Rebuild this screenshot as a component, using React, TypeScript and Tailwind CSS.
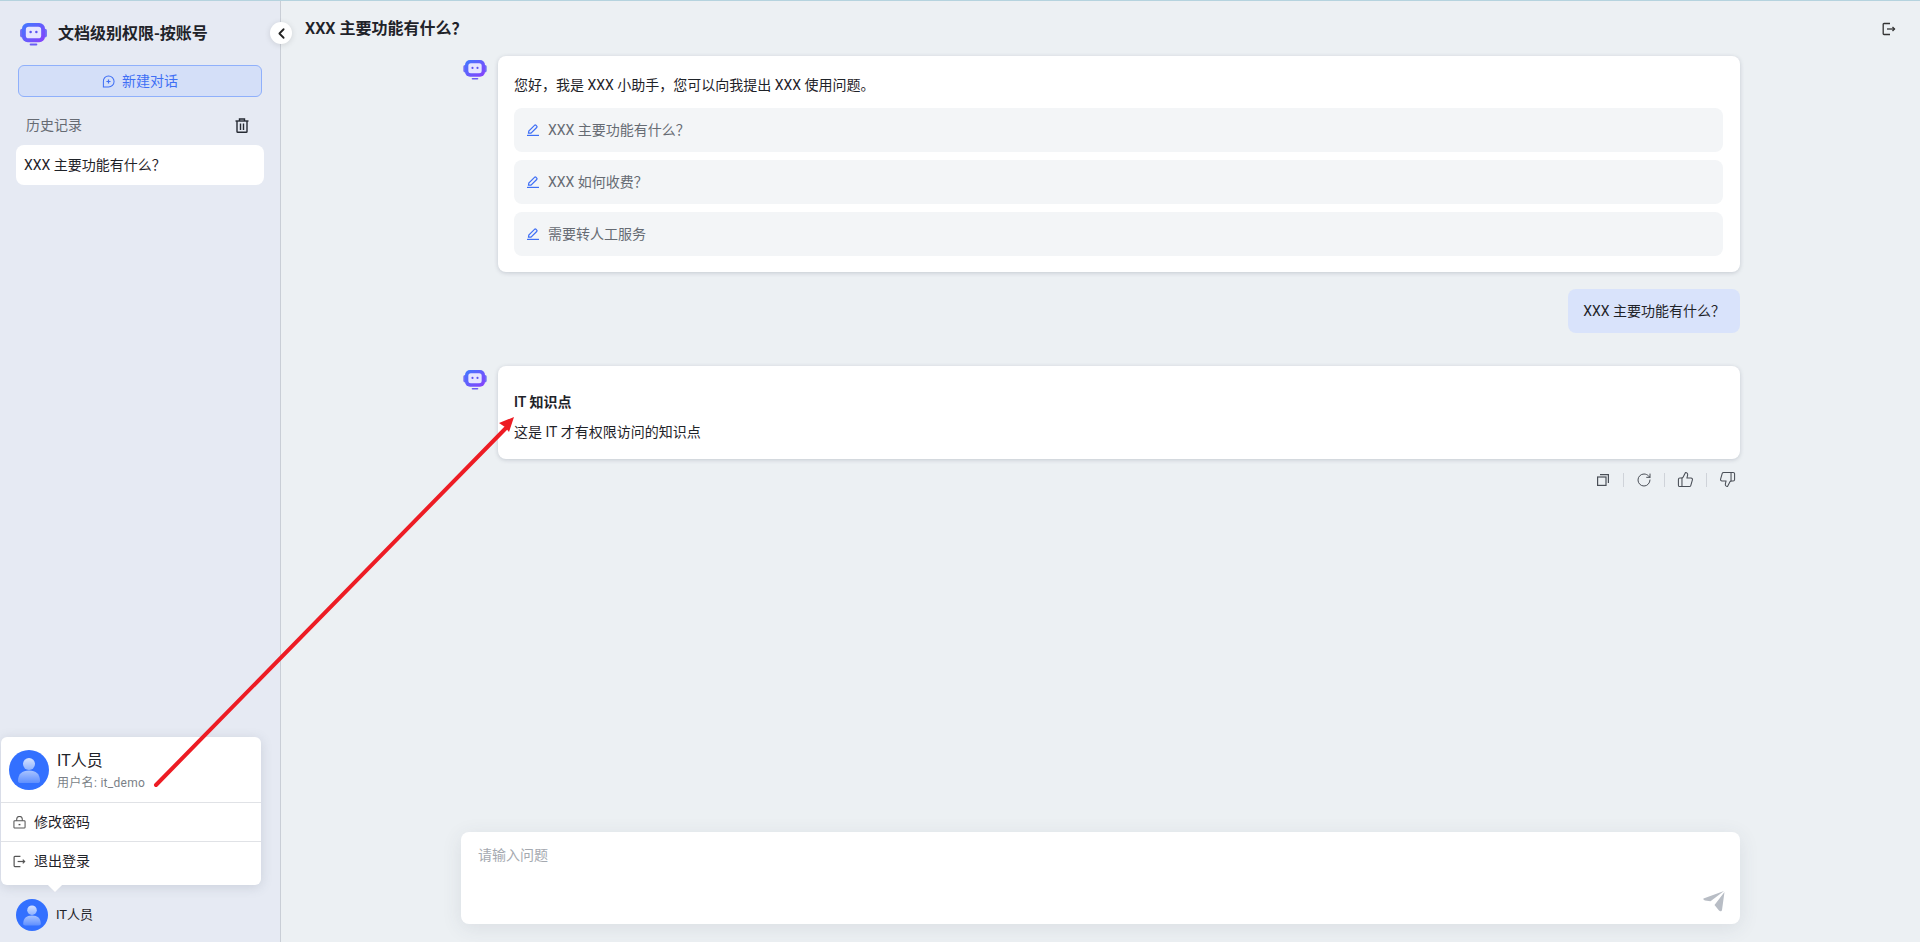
import { ChevronLeft, RotateCw, ThumbsDown, ThumbsUp } from "lucide-react";

const BotLogo = ({ className }: { className: string }) => (
  <svg viewBox="0 0 28 24" className={className}>
    <defs>
      <linearGradient id="botGrad" x1="0" y1="0" x2="1" y2="1">
        <stop offset="0" stopColor="#3f7bff" />
        <stop offset="1" stopColor="#8a3ffc" />
      </linearGradient>
    </defs>
    <rect x="0" y="6" width="4" height="9" rx="2" fill="#6f6cf5" />
    <rect x="24" y="6" width="4" height="9" rx="2" fill="#6f6cf5" />
    <rect x="2" y="0" width="24" height="20" rx="6" fill="url(#botGrad)" />
    <rect x="6" y="4" width="16" height="12" rx="3" fill="#e6e6ff" />
    <circle cx="11" cy="9.5" r="1.3" fill="#5b53f0" />
    <circle cx="17" cy="9.5" r="1.3" fill="#5b53f0" />
    <rect x="10" y="21.5" width="8" height="2" rx="1" fill="#6a5cf5" />
  </svg>
);

const Avatar = ({ className }: { className: string }) => (
  <div className={`rounded-full bg-[#3370ff] overflow-hidden shrink-0 ${className}`}>
    <svg viewBox="0 0 40 40" className="w-full h-full">
      <defs>
        <linearGradient id="headGrad" x1="0" y1="0" x2="0" y2="1">
          <stop offset="0" stopColor="#d5e2ff" />
          <stop offset="1" stopColor="#8fb2ff" />
        </linearGradient>
        <linearGradient id="bodyGrad" x1="0" y1="0" x2="0" y2="1">
          <stop offset="0" stopColor="#a9c4ff" />
          <stop offset="1" stopColor="#5f8fff" />
        </linearGradient>
      </defs>
      <circle cx="20" cy="14" r="6" fill="url(#headGrad)" />
      <path d="M9 31c0-7 4-10.500 11-10.500S31 24 31 31c0 1.500-1 2-2.500 2h-17C10 33 9 32.500 9 31z" fill="url(#bodyGrad)" />
    </svg>
  </div>
);

const ExitIcon = ({ className }: { className: string }) => (
  <svg viewBox="0 0 14 14" fill="none" stroke="currentColor" strokeWidth="1.300" className={className}>
    <path d="M8 1.500H2a.8.8 0 0 0-.8.8v9.400a.8.8 0 0 0 .8.8h6" />
    <path d="M5 7h7.500" />
    <path d="M10.500 5l2 2-2 2" />
  </svg>
);

const TrashIcon = () => (
  <svg viewBox="0 0 14 15" fill="none" stroke="#262a33" strokeWidth="1.400" className="w-[14px] h-[15px]">
    <path d="M0.500 3h13" />
    <path d="M4.500 3V1h5v2" />
    <path d="M2 3v10.500a.8.8 0 0 0 .8.8h8.400a.8.8 0 0 0 .8-.8V3" />
    <path d="M5.500 5.500v6.500M8.500 5.500v6.500" />
  </svg>
);

const LockIcon = () => (
  <svg viewBox="0 0 14 14" fill="none" stroke="#555" strokeWidth="1.100" className="w-[13px] h-[13px]">
    <rect x="1" y="5" width="12" height="8" rx="1" />
    <path d="M4 5V3.500a3 3 0 0 1 6 0V5" />
    <path d="M6 8.500h2v1.500H6z" fill="#555" stroke="none" />
  </svg>
);

const NewChatIcon = () => (
  <svg viewBox="0 0 14 14" fill="none" stroke="#3f6ff5" strokeWidth="1.100" className="w-[13px] h-[13px]">
    <path d="M7 1a6 6 0 1 1 0 12H1.500V7A5.500 5.500 0 0 1 7 1z" />
    <path d="M7 4.800v4.400M4.800 7h4.400" strokeWidth="1.300" />
  </svg>
);

const PenIcon = () => (
  <svg viewBox="0 0 12 12" fill="none" stroke="#3f6ff5" strokeWidth="1.200" className="h-[12px] w-[12px] shrink-0">
    <path d="M1.500 9.200 L1.800 7 L7.500 1.300 a1 1 0 0 1 1.400 0 L9.700 2.100 a1 1 0 0 1 0 1.400 L4 9.200 Z" />
    <path d="M0 11.400h12" />
  </svg>
);

const CopyIcon = () => (
  <svg viewBox="0 0 12 12" fill="none" stroke="#4a4f57" strokeWidth="1.200" className="mr-[2px] h-[12px] w-[12px]">
    <rect x="0.600" y="3" width="8.400" height="8.400" />
    <path d="M3 0.600h8.400V9" />
  </svg>
);

const SendIcon = () => (
  <svg viewBox="0 0 22 22" className="w-[22px] h-[22px]" fill="#b8bdc5">
    <path d="M0.500 8.500 21 1 7.500 11.300 2 10.500C0.500 10 0 9 0.500 8.500z" />
    <path d="M21.500 2 19 20c-.2 1.500-2 1.800-3 .6L11.500 15 21.500 2z" />
  </svg>
);

const question = "XXX 主要功能有什么\uFF1F";
const greeting = "您好\uFF0C我是 XXX 小助手\uFF0C您可以向我提出 XXX 使用问题。";
const suggestions = [question, "XXX 如何收费\uFF1F", "需要转人工服务"];

export default function App() {
  return (
    <div
      className="relative flex h-[942px] w-[1920px] overflow-hidden border-t border-[#b5d3de] bg-[#ecf0f3] text-[14px] text-[#1f2329]"
      style={{ fontFamily: 'Roboto, "Noto Sans CJK SC", sans-serif' }}
    >
      {/* Left sidebar */}
      <aside className="relative flex w-[281px] shrink-0 flex-col border-r border-[#c9ced6] bg-[#e6eaf3]">
        <div className="flex h-[64px] items-center gap-[11px] pl-[20px] pt-[2px]">
          <BotLogo className="h-[23px] w-[27px]" />
          <span className="text-[16px] font-semibold text-[#1f2329]">文档级别权限-按账号</span>
        </div>
        <div className="flex h-[32px] mx-[18px] items-center justify-center gap-[7px] rounded-[6px] border border-[#8fb0fb] bg-[#d4dff8] text-[#3f6ff5]">
          <NewChatIcon />
          <span>新建对话</span>
        </div>
        <div className="mt-[16px] flex h-[24px] items-center justify-between pl-[26px] pr-[31px] text-[#666b73]">
          <span>历史记录</span>
          <TrashIcon />
        </div>
        <div className="mx-[16px] mt-[8px] flex h-[40px] items-center rounded-[8px] bg-white px-[8px]">
          {question}
        </div>
        <div className="flex-1" />
        <div className="flex h-[56px] items-center gap-[8px] pl-[16px] pt-[1px] text-[13px]">
          <Avatar className="h-[32px] w-[32px]" />
          <span>IT人员</span>
        </div>
        {/* User popover */}
        <div className="absolute bottom-[57px] left-[1px] w-[260px] rounded-[6px] bg-white shadow-[0_2px_12px_rgba(80,90,110,0.18)]">
          <div className="flex h-[66px] items-center gap-[8px] border-b border-[#e0e2e6] pl-[8px]">
            <Avatar className="h-[40px] w-[40px]" />
            <div className="flex flex-col gap-[4px] pt-[3px]">
              <span className="text-[16px] leading-[20px]">IT人员</span>
              <span className="text-[12px] leading-[16px] tracking-[0.3px] text-[#7a7f87]">用户名: it_demo</span>
            </div>
          </div>
          <div className="flex h-[39px] items-center gap-[8px] border-b border-[#e0e2e6] pl-[12px]">
            <LockIcon />
            <span>修改密码</span>
          </div>
          <div className="flex h-[43px] items-center gap-[8px] pl-[12px] pb-[4px]">
            <ExitIcon className="h-[13px] w-[13px] text-[#555]" />
            <span>退出登录</span>
          </div>
          <div className="absolute -bottom-[5px] left-[49px] h-[10px] w-[10px] rotate-45 bg-white" />
        </div>
        {/* Collapse button */}
        <button className="absolute left-[270px] top-[21px] flex h-[22px] w-[22px] items-center justify-center rounded-full bg-white shadow-[0_1px_6px_rgba(0,0,0,0.12)]">
          <ChevronLeft className="h-[17px] w-[17px] text-[#222]" strokeWidth={2.500} />
        </button>
      </aside>

      {/* Main */}
      <main className="flex min-w-0 flex-1 flex-col">
        <header className="flex h-[55px] shrink-0 items-center justify-between pl-[24px] pr-[24px]">
          <h1 className="text-[16px] font-semibold text-[#1f2329]">{question}</h1>
          <ExitIcon className="h-[14px] w-[14px] text-[#333]" />
        </header>

        <div className="ml-[180px] flex w-[1279px] flex-1 flex-col">
          <div className="flex gap-[11px] pl-[2px]">
            <BotLogo className="mt-[4px] h-[20px] w-[24px] shrink-0" />
            <div className="flex-1 rounded-[8px] bg-white py-[16px] pl-[16px] pr-[17px] shadow-[0_1px_4px_rgba(60,70,90,0.22)]">
              <p className="h-[36px] leading-[26px]">{greeting}</p>
              <div className="flex flex-col gap-[8px]">
                {suggestions.map((text) => (
                  <div key={text} className="flex h-[44px] items-center gap-[9px] rounded-[8px] bg-[#f3f5f7] pl-[13px] text-[#666b73]">
                    <PenIcon />
                    <span>{text}</span>
                  </div>
                ))}
              </div>
            </div>
          </div>

          <div className="mt-[17px] flex justify-end">
            <div className="flex h-[44px] items-center rounded-[8px] bg-[#d9e3fb] px-[15px]">{question}</div>
          </div>

          <div className="mt-[33px] flex gap-[11px] pl-[2px]">
            <BotLogo className="mt-[4px] h-[20px] w-[24px] shrink-0" />
            <div className="flex-1 rounded-[8px] bg-white px-[16px] pb-[15px] pt-[24px] shadow-[0_1px_4px_rgba(60,70,90,0.22)]">
              <p className="font-semibold leading-[24px]">IT 知识点</p>
              <p className="mt-[6px] leading-[24px]">这是 IT 才有权限访问的知识点</p>
            </div>
          </div>

          <div className="mt-[12px] flex items-center justify-end gap-[12px] pr-[4px] text-[#4a4f57]">
            <CopyIcon />
            <span className="h-[14px] w-px bg-[#cfd3d9]" />
            <RotateCw className="h-[16px] w-[16px]" strokeWidth={1.500} />
            <span className="h-[14px] w-px bg-[#cfd3d9]" />
            <ThumbsUp className="h-[17px] w-[17px]" strokeWidth={1.500} />
            <span className="h-[14px] w-px bg-[#cfd3d9]" />
            <ThumbsDown className="h-[17px] w-[17px]" strokeWidth={1.500} />
          </div>
        </div>

        <div className="ml-[180px] mb-[18px] flex h-[92px] w-[1279px] shrink-0 flex-col justify-between rounded-[8px] bg-white py-[12px] pl-[17px] pr-[15px] shadow-[0_4px_20px_rgba(60,70,90,0.1)]">
          <span className="leading-[22px] text-[#a5a9b0]">请输入问题</span>
          <div className="flex justify-end">
            <SendIcon />
          </div>
        </div>
      </main>

      {/* Red annotation arrow */}
      <svg className="pointer-events-none absolute left-0 top-0 h-[942px] w-[1920px]" viewBox="0 0 1920 942">
        <path d="M156 784 L506 427" stroke="#ed1c24" strokeWidth="4" strokeLinecap="round" fill="none" />
        <path d="M514 416 L499 422 L505 426 L509 431 Z" fill="#ed1c24" />
      </svg>
    </div>
  );
}
